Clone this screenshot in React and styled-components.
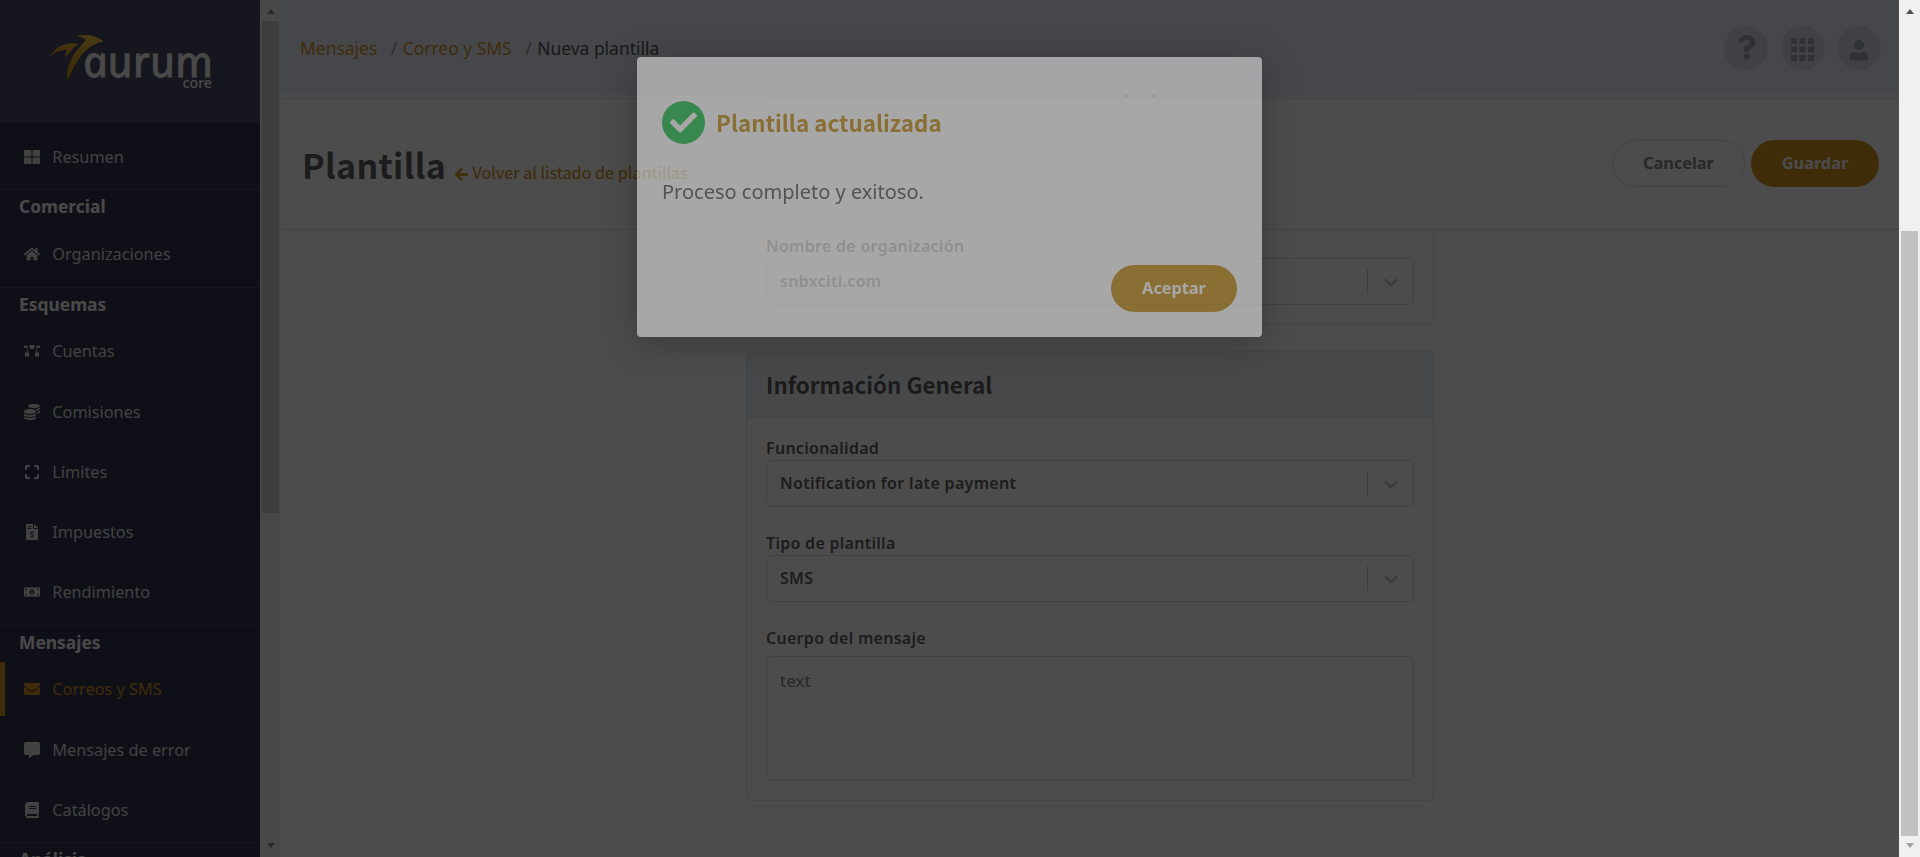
import React from 'react';
import styled, { createGlobalStyle } from 'styled-components';
import {
  FaHome, FaCoins, FaExpand, FaFileInvoiceDollar, FaMoneyBillAlt, FaEnvelope, FaBook,
  FaArrowLeft, FaQuestion, FaCheck, FaCommentAlt,
} from 'react-icons/fa';

const gold = '#d2951f';
const heading = '"Noto Sans CJK JP", "Noto Sans", sans-serif';

const Global = createGlobalStyle`
  * { box-sizing: border-box; }
  body { margin: 0; font-family: "Noto Sans", sans-serif; font-size: 16px; color: #6b6b6b; overflow: hidden; }
`;

const Page = styled.div`
  display: flex;
  position: relative;
  height: 857px;
  overflow: hidden;
`;

const Viewport = styled.div`
  display: flex;
  width: 1899px;
  height: 857px;
  overflow: hidden;
  background: #fff;
`;

const Sidebar = styled.nav`
  width: 260px;
  flex: none;
  height: 857px;
  overflow: hidden;
  background: #343450;
`;

const LogoBox = styled.div`
  height: 123px;
  background: #4b4b64;
`;

const Group = styled.div`
  border-bottom: 1px solid #4b4b64;
  padding-top: ${(p) => p.$top || 0}px;
`;

const GroupTitle = styled.div`
  height: 36.3px;
  padding-left: 19px;
  line-height: 32px;
  font-size: 17.4px;
  font-weight: 700;
  color: #f6f6f6;
`;

const Item = styled.div`
  height: 54px;
  margin-bottom: 6.15px;
  padding-top: 1px;
  padding-left: ${(p) => (p.$active ? 19 : 24)}px;
  border-left: ${(p) => (p.$active ? `5px solid ${gold}` : '0')};
  display: flex;
  align-items: center;
  gap: 12.3px;
  font-size: 16.25px;
  color: ${(p) => (p.$active ? gold : '#dcdcdc')};
  svg { width: 16px; height: 16px; flex: none; }
`;

const Scroll = styled.div`
  width: 21px;
  flex: none;
  height: 857px;
  display: flex;
  flex-direction: column;
  align-items: center;
  padding: 9px 0;
  background: ${(p) => p.$bg};
`;

const Thumb = styled.div`
  width: 17px;
  height: ${(p) => p.$h}px;
  margin: ${(p) => p.$mt}px 0 auto;
  background: ${(p) => p.$bg};
`;

const Arrow = styled.i`
  width: 0;
  height: 0;
  border: 4.5px solid transparent;
  border-width: ${(p) => (p.$down ? '5px 4.5px 0' : '0 4.5px 5px')};
  border-${(p) => (p.$down ? 'top' : 'bottom')}-color: ${(p) => p.$c};
`;

const Main = styled.main`
  flex: 1;
  display: flex;
  flex-direction: column;
`;

const TopBar = styled.header`
  height: 95px;
  flex: none;
  padding: 0 18px 0 19px;
  display: flex;
  justify-content: space-between;
  align-items: center;
  background: #ebeef9;
`;

const Crumbs = styled.div`
  display: flex;
  font-size: 17.45px;
  line-height: 24px;
  padding-top: 1px;
  color: #555;
`;

const Crumb = styled.a`
  color: ${gold};
`;

const Slash = styled.span`
  margin: 0 5.5px 0 13.5px;
  color: #999;
`;

const Actions = styled.div`
  display: flex;
  gap: 12.5px;
`;

const Round = styled.div`
  width: 44px;
  height: 44px;
  padding-top: ${(p) => p.$drop || 0}px;
  border-radius: 50%;
  background: #d7dbe5;
  color: #9ba9ba;
  display: flex;
  align-items: center;
  justify-content: center;
`;

const Strip = styled.div`
  height: 3px;
  flex: none;
  padding: 0 484px 0 485px;
`;

const StripCard = styled.div`
  height: 3px;
  background: #eff2f8;
  display: flex;
  gap: 26px;
  padding-left: 358px;
`;

const Tail = styled.i`
  width: 3px;
  height: 2px;
  background: #777;
`;

const TitleBar = styled.section`
  height: 132px;
  flex: none;
  border-top: 1px solid #e4e4e4;
  border-bottom: 1px solid #e4e4e4;
  padding: 0 20px 0 21px;
  display: flex;
  justify-content: space-between;
`;

const TitleGroup = styled.div`
  display: flex;
  align-items: flex-start;
  height: 80px;
  margin-top: 26px;
  font-family: ${heading};
`;

const Title = styled.h1`
  margin: 0;
  font-size: 34px;
  line-height: 80px;
  font-weight: 700;
  letter-spacing: 0.3px;
  color: #606060;
  width: 151.5px;
  white-space: nowrap;
`;

const Back = styled.a`
  display: flex;
  align-items: center;
  gap: 4px;
  font-size: 16.2px;
  color: ${gold};
  -webkit-text-stroke: 0.2px ${gold};
  white-space: nowrap;
  margin-top: 35px;
  line-height: 24px;
  svg { margin-top: 4px; }
`;

const Buttons = styled.div`
  display: flex;
  gap: 6px;
  margin-top: 41px;
`;

const Button = styled.button`
  width: ${(p) => p.$w}px;
  height: 47px;
  padding: 0 0 1.5px;
  border-radius: 24px;
  border: ${(p) => (p.$outline ? '1px solid #e2e2e2' : '0')};
  background: ${(p) => (p.$outline ? '#fff' : p.$bg || gold)};
  color: ${(p) => (p.$outline ? '#858585' : '#fff')};
  font: 700 16.3px "Noto Sans", sans-serif;
`;

const Body = styled.div`
  flex: 1;
  padding-left: 465px;
`;

const Card = styled.section`
  width: 688px;
  border: 1px solid #e4e6e8;
  border-top-width: ${(p) => (p.$cut ? 0 : 1)}px;
  border-radius: ${(p) => (p.$cut ? '0 0 5px 5px' : '5px')};
  margin-bottom: 25px;
  height: ${(p) => p.$h}px;
  overflow: hidden;
`;

const CardHead = styled.h2`
  margin: 0;
  height: 67px;
  padding-left: 19px;
  border-bottom: 1px solid #e1e4e8;
  background: #eff2f8;
  font: 700 22.4px/67px ${heading};
  color: #5c5c5c;
`;

const Field = styled.div`
  padding: 0 19px;
  margin-top: ${(p) => p.$mt}px;
`;

const Label = styled.label`
  display: block;
  height: ${(p) => p.$h || 24}px;
  line-height: 24px;
  font-size: 16px;
  font-weight: 600;
  letter-spacing: 0.28px;
  color: #606060;
`;

const Select = styled.div`
  height: 47px;
  border: 1px solid #dedede;
  border-radius: 5px;
  display: flex;
  align-items: center;
  padding: 0 11.5px 0 13px;
  font-size: 16px;
  font-weight: 600;
  letter-spacing: 0.32px;
  color: #606060;
  span { flex: 1; padding-bottom: 1px; }
`;

const Divider = styled.i`
  width: 1px;
  height: 25px;
  margin-right: 11.5px;
  background: #d0d0d0;
`;

const Area = styled.div`
  height: 125px;
  border: 1px solid #e2e2e2;
  border-radius: 5px;
  padding: 12px 13px;
  font-size: 17px;
  line-height: 24px;
  color: #858585;
`;

const Overlay = styled.div`
  position: absolute;
  left: 0;
  top: 0;
  width: 1899px;
  height: 857px;
  background: rgba(0, 0, 0, 0.7);
  backdrop-filter: blur(0.6px);
`;

const Modal = styled.div`
  position: absolute;
  left: 637px;
  top: 56.5px;
  width: 625px;
  height: 280px;
  padding: 44px 25px 0;
  border-radius: 4px;
  background: #fff;
  opacity: 0.51;
  box-shadow: 0 6px 36px rgba(0, 0, 0, 0.5);
  display: flex;
  flex-direction: column;
`;

const ModalTitle = styled.div`
  display: flex;
  align-items: center;
  gap: 11px;
  height: 44px;
  font: 700 22.4px/42px ${heading};
  color: #c69121;
`;

const ModalName = styled.span`
  padding-bottom: 2px;
`;

const Tick = styled.span`
  width: 43px;
  height: 43px;
  border-radius: 50%;
  background: #25c151;
  color: #fff;
  display: flex;
  align-items: center;
  justify-content: center;
`;

const ModalText = styled.p`
  margin: 32px 0 0;
  font-size: 20px;
  line-height: 30px;
  color: #5a5a5a;
`;

const ModalFoot = styled.div`
  display: flex;
  justify-content: flex-end;
  margin-top: 58px;
  button { padding-bottom: 0; }
`;

const Logo = () => (
  <svg width="260" height="123" viewBox="0 0 260 123">
    <defs>
      <linearGradient id="wing" x1="1" y1="0" x2="0" y2="1">
        <stop offset="0" stopColor="#f0cc50" />
        <stop offset="1" stopColor="#c87800" />
      </linearGradient>
    </defs>
    <path fill="url(#wing)" d="M77 36.500C87 33 97 36 103.500 41.500C92 44 84 50 78 60C73 68 70 75 68 80C66 73 68 66 71 60C75 52 80 46 86 40C83 37.500 80 37 77 36.500ZM49.500 57C55 46 67 41 79 44C74 47 69 52 65.500 58C65 55 66 52 67 50C60 50 55 52 49.500 57Z" />
    <g fill="#f4f4f4" fontFamily="Noto Sans">
      <text transform="translate(85.500 77) skewX(12)" fontStyle="italic" fontWeight="400" fontSize="43" textLength="130" lengthAdjust="spacingAndGlyphs" stroke="#f4f4f4" strokeWidth=".9">aurum</text>
      <text x="182.500" y="87.700" fontSize="14" fontWeight="500" textLength="29.500" lengthAdjust="spacingAndGlyphs">core</text>
    </g>
  </svg>
);

const GridIcon = () => (
  <svg viewBox="0 0 16 16" fill="currentColor"><path d="M0 1h7.500v6.500H0zM8.500 1H16v6.500H8.500zM0 8.500h7.500V15H0zM8.500 8.500H16V15H8.500z" /></svg>
);

const NodesIcon = () => (
  <svg viewBox="0 0 16 16" fill="currentColor" stroke="currentColor">
    <path stroke="none" d="M6 2h4v4H6zM1 9.500h4v4H1zM11 9.500h4v4h-4zM0 2.500h2.500V5H0zM13.500 2.500H16V5h-2.500z" />
    <path fill="none" strokeWidth=".9" d="M2 3.700h12M2 5l2 2-1 3M14 5l-2 2 1 3" />
  </svg>
);

const AppsIcon = () => (
  <svg width="23" height="23" viewBox="0 0 23 23" fill="currentColor">
    {[0, 8.5, 17].map((y) => [0, 8.5, 17].map((x) => <rect key={`${x}-${y}`} x={x} y={y} width="6" height="6" />))}
  </svg>
);

const UserIcon = () => (
  <svg width="18" height="21" viewBox="0 0 18 21" fill="currentColor">
    <circle cx="9" cy="5" r="5" />
    <path d="M0 20v-3q0-5 5-5 4 1.500 8 0 5 0 5 5v3q0 .5-1 .5H1q-1 0-1-.5z" />
  </svg>
);

const Chevron = () => (
  <svg width="22" height="22" viewBox="0 0 20 20" fill="#c4c4c4">
    <path d="M4.516 7.548c0.436-0.446 1.043-0.481 1.576 0l3.908 3.747 3.908-3.747c0.533-0.481 1.141-0.446 1.574 0 0.436 0.445 0.408 1.197 0 1.615-0.406 0.418-4.695 4.502-4.695 4.502-0.217 0.223-0.502 0.335-0.787 0.335s-0.570-0.112-0.789-0.335c0 0-4.287-4.084-4.695-4.502s-0.436-1.170 0-1.615z" />
  </svg>
);

const groups = [
  { title: 'Comercial', items: [['Organizaciones', FaHome]] },
  {
    title: 'Esquemas',
    items: [
      ['Cuentas', NodesIcon], ['Comisiones', FaCoins], ['Límites', FaExpand],
      ['Impuestos', FaFileInvoiceDollar], ['Rendimiento', FaMoneyBillAlt],
    ],
  },
  { title: 'Mensajes', items: [['Correos y SMS', FaEnvelope], ['Mensajes de error', FaCommentAlt], ['Catálogos', FaBook]] },
];

const SelectField = ({ label, value, mt }) => (
  <Field $mt={mt}>
    <Label>{label}</Label>
    <Select><span>{value}</span><Divider /><Chevron /></Select>
  </Field>
);

export default function App() {
  return (
    <Page>
      <Global />
      <Viewport>
        <Sidebar>
          <LogoBox><Logo /></LogoBox>
          <Group $top={6}><Item><GridIcon />Resumen</Item></Group>
          {groups.map((g) => (
            <Group key={g.title}>
              <GroupTitle>{g.title}</GroupTitle>
              {g.items.map(([name, Icon]) => (
                <Item key={name} $active={name === 'Correos y SMS'}><Icon />{name}</Item>
              ))}
            </Group>
          ))}
          <GroupTitle>Análisis</GroupTitle>
        </Sidebar>
        <Scroll $bg="#f1f1f1">
          <Arrow $c="#8a8a8a" />
          <Thumb $bg="#cdcdcd" $h={492} $mt={7} />
          <Arrow $down $c="#8a8a8a" />
        </Scroll>
        <Main>
          <TopBar>
            <Crumbs>
              <Crumb>Mensajes</Crumb><Slash>/</Slash>
              <Crumb>Correo y SMS</Crumb><Slash>/</Slash>
              <span>Nueva plantilla</span>
            </Crumbs>
            <Actions>
              <Round><FaQuestion size={25} /></Round>
              <Round $drop={3}><AppsIcon /></Round>
              <Round $drop={5}><UserIcon /></Round>
            </Actions>
          </TopBar>
          <Strip><StripCard><Tail /><Tail /></StripCard></Strip>
          <TitleBar>
            <TitleGroup>
              <Title>Plantilla</Title>
              <Back><FaArrowLeft size={15} />Volver al listado de plantillas</Back>
            </TitleGroup>
            <Buttons>
              <Button $outline $w={133}>Cancelar</Button>
              <Button $w={128}>Guardar</Button>
            </Buttons>
          </TitleBar>
          <Body>
            <Card $cut $h={95}>
              <SelectField label="Nombre de organización" value="snbxciti.com" mt={4} />
            </Card>
            <Card $h={451}>
              <CardHead>Información General</CardHead>
              <SelectField label="Funcionalidad" value="Notification for late payment" mt={18} />
              <SelectField label="Tipo de plantilla" value="SMS" mt={24} />
              <Field $mt={24}>
                <Label $h={30}>Cuerpo del mensaje</Label>
                <Area>text</Area>
              </Field>
            </Card>
          </Body>
        </Main>
      </Viewport>
      <Scroll $bg="#f0f0f0">
        <Arrow $c="#505050" />
        <Thumb $bg="#c1c1c1" $h={605} $mt={217} />
        <Arrow $down $c="#a3a3a3" />
      </Scroll>
      <Overlay />
      <Modal>
        <ModalTitle><Tick><FaCheck size={27} /></Tick><ModalName>Plantilla actualizada</ModalName></ModalTitle>
        <ModalText>Proceso completo y exitoso.</ModalText>
        <ModalFoot><Button $w={126} $bg="#c69121">Aceptar</Button></ModalFoot>
      </Modal>
    </Page>
  );
}
